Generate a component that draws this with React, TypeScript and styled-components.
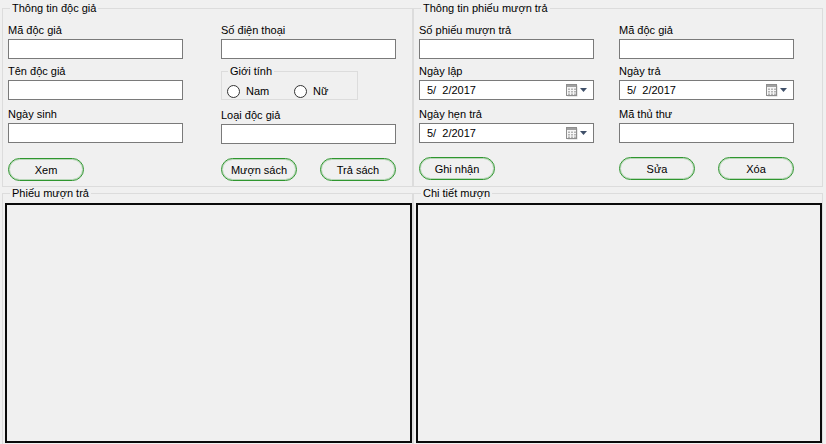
import React from 'react';
import styled, { createGlobalStyle } from 'styled-components';

const GlobalStyle = createGlobalStyle`
  html, body {
    margin: 0;
    padding: 0;
    background: #f0f0f0;
  }
  body {
    font-family: "Liberation Sans", Arial, sans-serif;
    font-size: 11px;
    color: #000;
  }
`;

const Page = styled.div`
  width: 826px;
  height: 444px;
  overflow: hidden;
  box-sizing: border-box;
  padding: 8px 0 0 2px;
  display: flex;
  flex-direction: column;
  gap: 6px;
`;

const Row = styled.div`
  display: flex;
`;

const GroupBox = styled.div<{ $width: number; $height: number }>`
  position: relative;
  box-sizing: border-box;
  width: ${p => p.$width}px;
  height: ${p => p.$height}px;
  border: 1px solid #dcdcdc;
  flex-shrink: 0;
`;

const Legend = styled.span<{ $left: number }>`
  position: absolute;
  top: -7px;
  left: ${p => p.$left}px;
  padding: 0 2px;
  background: #f0f0f0;
  line-height: 13px;
  white-space: nowrap;
`;

const FormGrid = styled.div<{ $gap: number }>`
  display: grid;
  grid-template-columns: 175px 175px;
  column-gap: ${p => p.$gap}px;
  padding: 15px 0 0 5px;
`;

const Column = styled.div`
  display: flex;
  flex-direction: column;
`;

const Field = styled.div<{ $mt?: number }>`
  display: flex;
  flex-direction: column;
  gap: 2px;
  margin-top: ${p => p.$mt ?? 0}px;
`;

const Label = styled.label`
  line-height: 13px;
  white-space: nowrap;
`;

const TextBox = styled.input`
  box-sizing: border-box;
  width: 175px;
  height: 20px;
  margin: 0;
  padding: 0 3px;
  border: 1px solid #7a7a7a;
  background: #fff;
  font: inherit;
  outline: none;
`;

const DatePicker = styled.div`
  box-sizing: border-box;
  width: 175px;
  height: 20px;
  border: 1px solid #7a7a7a;
  background: #fff;
  display: flex;
  align-items: center;
  gap: 2px;
  padding: 0 6px 0 7px;
`;

const DateText = styled.span`
  flex: 1;
  white-space: pre;
  line-height: 13px;
`;

const GenderBox = styled.div`
  position: relative;
  box-sizing: border-box;
  width: 137px;
  height: 29px;
  margin-top: 12px;
  border: 1px solid #dcdcdc;
  padding: 11px 0 0 5px;
  display: grid;
  grid-template-columns: 67px auto;
`;

const RadioItem = styled.label`
  display: flex;
  align-items: center;
  gap: 6px;
  line-height: 13px;
`;

const RadioCircle = styled.span`
  box-sizing: border-box;
  width: 13px;
  height: 13px;
  border: 1px solid #333;
  border-radius: 50%;
  background: #fff;
`;

const ButtonRow = styled.div`
  display: flex;
  justify-content: space-between;
  margin-top: 14px;
`;

const PillButton = styled.button`
  box-sizing: border-box;
  width: 76px;
  height: 23px;
  padding: 0;
  border: 1px solid #2f962f;
  box-shadow: inset 0 0 0 1px rgba(60, 160, 60, 0.3);
  border-radius: 12px;
  background: transparent;
  font: inherit;
  color: #000;
`;

const ListContent = styled.div`
  padding: 9px 0 0 2px;
`;

const ListPanel = styled.div`
  box-sizing: border-box;
  height: 240px;
  border: 2px solid #0a0a0a;
`;

const CalendarIcon = () => (
  <svg width="12" height="13" viewBox="0 0 12 13">
    <rect x="1.5" y="1.5" width="10" height="11" fill="#d4d4d4" />
    <rect x="0.5" y="0.5" width="10" height="11" fill="#f6f6f6" stroke="#8e8e8e" />
    <rect x="1" y="1" width="9" height="2" fill="#a0a0a0" />
    {[0, 1, 2].map(r =>
      [0, 1, 2].map(c => (
        <rect key={`${r}-${c}`} x={2 + c * 3} y={4.5 + r * 2.5} width="2" height="1.5" fill="#b4b4b4" />
      ))
    )}
  </svg>
);

const DropArrow = () => (
  <svg width="7" height="4" viewBox="0 0 7 4">
    <polygon points="0,0 7,0 3.5,4" fill="#3f5069" />
  </svg>
);

const DateField: React.FC<{ value: string }> = ({ value }) => (
  <DatePicker>
    <DateText>{value}</DateText>
    <CalendarIcon />
    <DropArrow />
  </DatePicker>
);

const App: React.FC = () => {
  const date = '5/\u00a0 2/2017';
  return (
    <>
      <GlobalStyle />
      <Page>
        <Row>
          <GroupBox $width={411} $height={179}>
            <Legend $left={7}>Thông tin độc giả</Legend>
            <FormGrid $gap={38}>
              <Column>
                <Field>
                  <Label>Mã độc giả</Label>
                  <TextBox />
                </Field>
                <Field $mt={6}>
                  <Label>Tên độc giả</Label>
                  <TextBox />
                </Field>
                <Field $mt={8}>
                  <Label>Ngày sinh</Label>
                  <TextBox />
                </Field>
              </Column>
              <Column>
                <Field>
                  <Label>Số điện thoại</Label>
                  <TextBox />
                </Field>
                <GenderBox>
                  <Legend $left={6}>Giới tính</Legend>
                  <RadioItem>
                    <RadioCircle />
                    Nam
                  </RadioItem>
                  <RadioItem>
                    <RadioCircle />
                    Nữ
                  </RadioItem>
                </GenderBox>
                <Field $mt={9}>
                  <Label>Loại độc giả</Label>
                  <TextBox />
                </Field>
              </Column>
              <ButtonRow>
                <PillButton>Xem</PillButton>
              </ButtonRow>
              <ButtonRow>
                <PillButton>Mượn sách</PillButton>
                <PillButton>Trả sách</PillButton>
              </ButtonRow>
            </FormGrid>
          </GroupBox>
          <GroupBox $width={410} $height={179}>
            <Legend $left={7}>Thông tin phiếu mượn trả</Legend>
            <FormGrid $gap={25}>
              <Column>
                <Field>
                  <Label>Số phiếu mượn trả</Label>
                  <TextBox />
                </Field>
                <Field $mt={6}>
                  <Label>Ngày lập</Label>
                  <DateField value={date} />
                </Field>
                <Field $mt={8}>
                  <Label>Ngày hẹn trả</Label>
                  <DateField value={date} />
                </Field>
              </Column>
              <Column>
                <Field>
                  <Label>Mã độc giả</Label>
                  <TextBox />
                </Field>
                <Field $mt={6}>
                  <Label>Ngày trả</Label>
                  <DateField value={date} />
                </Field>
                <Field $mt={8}>
                  <Label>Mã thủ thư</Label>
                  <TextBox />
                </Field>
              </Column>
              <ButtonRow>
                <PillButton>Ghi nhận</PillButton>
              </ButtonRow>
              <ButtonRow>
                <PillButton>Sửa</PillButton>
                <PillButton>Xóa</PillButton>
              </ButtonRow>
            </FormGrid>
          </GroupBox>
        </Row>
        <Row>
          <GroupBox $width={411} $height={256}>
            <Legend $left={7}>Phiếu mượn trả</Legend>
            <ListContent>
              <ListPanel />
            </ListContent>
          </GroupBox>
          <GroupBox $width={410} $height={256}>
            <Legend $left={7}>Chi tiết mượn</Legend>
            <ListContent>
              <ListPanel />
            </ListContent>
          </GroupBox>
        </Row>
      </Page>
    </>
  );
};

export default App;
